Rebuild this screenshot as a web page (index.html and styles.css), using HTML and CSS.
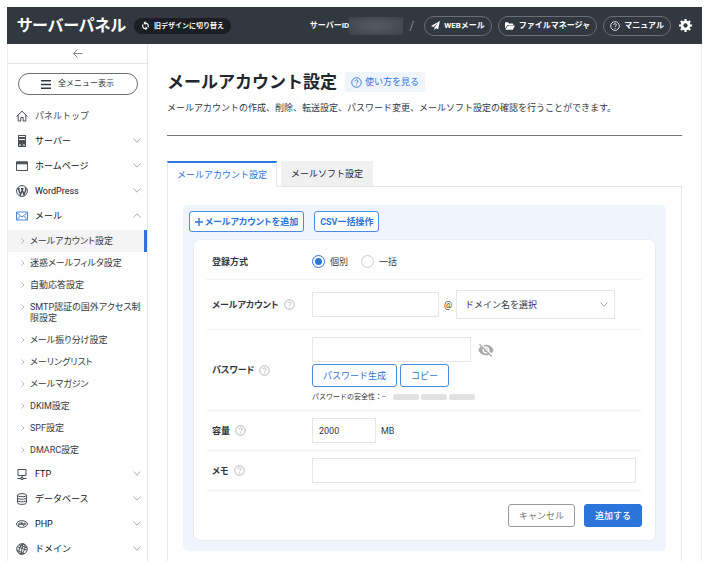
FILE: index.html
```html
<!DOCTYPE html>
<html lang="ja">
<head>
    <meta charset="UTF-8">
    <meta name="viewport" content="width=device-width, initial-scale=1.0">
    <title>サーバーパネル</title>
    <link rel="stylesheet" href="styles.css">
</head>
<body>
    <svg class="sprite" aria-hidden="true">
        <symbol id="down" viewBox="0 0 8 5"><path d="M.5 .5 4 4.2 7.5 .5"/></symbol>
        <symbol id="up" viewBox="0 0 8 5"><path d="M.5 4.5 4 .8 7.5 4.5"/></symbol>
        <symbol id="right" viewBox="0 0 4 6"><path d="M.5 .5 3 3 .5 5.5"/></symbol>
        <symbol id="help" viewBox="0 0 12 12"><circle cx="6" cy="6" r="5.2"/><path d="M4.4 4.8c0-2.2 3.3-2.1 3.3-.2 0 1.2-1.6 1.2-1.6 2.4M6.1 8.2v1"/></symbol>
    </svg>

    <header class="header">
        <div class="logo">サーバーパネル</div>
        <button class="switch" type="button">
            <svg width="9" height="9" viewBox="0 0 24 24" fill="currentColor"><path d="M12 4V0L6.500 5.500 12 11V7c3.300 0 6 2.500 6 6 0 1-.3 2-.8 2.800l2 2C20.300 16.300 21 14.700 21 13c0-5-4-9-9-9zM12 19c-3.300 0-6-2.700-6-6 0-1 .3-2 .8-2.800l-2-2C3.700 9.600 3 11.200 3 13c0 5 4 9 9 9v3l5.500-5.500L12 14z"/></svg>
            旧デザインに切り替え
        </button>
        <div class="header-right">
            <span class="server-id">サーバーID<span class="masked"></span></span>
            <span class="slash">/</span>
            <a class="pill" href="#">
                <svg width="9" height="9" viewBox="0 0 24 24" fill="currentColor"><path d="M24 0 0 13l6 3L19 5 9 17.500V24l4-5 6 3z"/></svg>
                WEBメール
            </a>
            <a class="pill" href="#">
                <svg width="10" height="8" viewBox="0 0 20 16" fill="currentColor"><path d="M0 13V2c0-1 .6-1.500 1.500-1.500H6l2 2.500h7c1 0 1.500.6 1.500 1.500V6H5L0 13zM5.800 7.200H20L15.500 15.500H.8z"/></svg>
                ファイルマネージャ
            </a>
            <a class="pill" href="#">
                <svg class="line" width="10" height="10"><use href="#help"/></svg>
                マニュアル
            </a>
            <button class="gear" type="button" aria-label="設定">
                <svg width="13" height="13" viewBox="0 0 24 24"><g fill="currentColor"><path d="M10 0h4v24h-4z"/><path d="M10 0h4v24h-4z" transform="rotate(45 12 12)"/><path d="M10 0h4v24h-4z" transform="rotate(90 12 12)"/><path d="M10 0h4v24h-4z" transform="rotate(135 12 12)"/><circle cx="12" cy="12" r="9"/></g><circle class="gear-hole" cx="12" cy="12" r="4"/></svg>
            </button>
        </div>
    </header>

    <div class="layout">
        <nav class="sidebar">
            <button class="collapse" type="button" aria-label="閉じる">
                <svg class="line" width="10" height="9" viewBox="0 0 10 9"><path d="M9.500 4.500h-9M4.500 .5l-4 4 4 4"/></svg>
            </button>
            <button class="all-menu" type="button">
                <svg class="line thick" width="10" height="9" viewBox="0 0 10 9"><path d="M0 .8h10M0 4.500h10M0 8.200h10"/></svg>
                全メニュー表示
            </button>
            <ul class="menu">
                <li><a class="menu-item" href="#">
                    <svg class="line icon" viewBox="0 0 12 12"><path d="M.5 6.500 6 1.200l5.500 5.300M2.200 5.200v5.800h2.600V7.500h2.400V11h2.600V5.200"/></svg>
                    <span class="light">パネルトップ</span>
                </a></li>
                <li><a class="menu-item" href="#">
                    <svg class="icon" viewBox="0 0 12 12"><path fill="currentColor" d="M2 0h8v12H2z"/><path fill="none" stroke="#fff" d="M3 1.500h6M3 4.500h6M3 10h2M7 10h2"/></svg>
                    <span>サーバー</span><svg class="line arrow"><use href="#down"/></svg>
                </a></li>
                <li><a class="menu-item" href="#">
                    <svg class="line icon" viewBox="0 0 12 12"><path d="M.5 2h11v8.500H.5z"/><path fill="currentColor" d="M.5 2h11v1.800H.5z"/></svg>
                    <span>ホームページ</span><svg class="line arrow"><use href="#down"/></svg>
                </a></li>
                <li><a class="menu-item" href="#">
                    <svg class="line icon" viewBox="0 0 12 12"><circle cx="6" cy="6" r="5.400"/><path class="thick" d="M1.500 3.800h2.200M2.500 4l2 5.800L6 5.500M5 3.800h2.500M6 4l2 5.800 1.800-5c.2-.8-.6-1.200-.5-2.300"/></svg>
                    <span>WordPress</span><svg class="line arrow"><use href="#down"/></svg>
                </a></li>
                <li><a class="menu-item" href="#">
                    <svg class="line icon blue" viewBox="0 0 12 12"><path d="M.5 2h11v8H.5zM.5 2.500 6 7l5.500-4.500M.5 10l3.700-4M11.500 10 7.800 6"/></svg>
                    <span>メール</span><svg class="line arrow"><use href="#up"/></svg>
                </a>
                <ul class="submenu">
                    <li><a class="active" href="#"><svg class="line"><use href="#right"/></svg><span>メールアカウント設定</span></a></li>
                    <li><a href="#"><svg class="line"><use href="#right"/></svg><span>迷惑メールフィルタ設定</span></a></li>
                    <li><a href="#"><svg class="line"><use href="#right"/></svg><span>自動応答設定</span></a></li>
                    <li><a href="#"><svg class="line"><use href="#right"/></svg><span>SMTP認証の国外アクセス制限設定</span></a></li>
                    <li><a href="#"><svg class="line"><use href="#right"/></svg><span>メール振り分け設定</span></a></li>
                    <li><a href="#"><svg class="line"><use href="#right"/></svg><span>メーリングリスト</span></a></li>
                    <li><a href="#"><svg class="line"><use href="#right"/></svg><span>メールマガジン</span></a></li>
                    <li><a href="#"><svg class="line"><use href="#right"/></svg><span>DKIM設定</span></a></li>
                    <li><a href="#"><svg class="line"><use href="#right"/></svg><span>SPF設定</span></a></li>
                    <li><a href="#"><svg class="line"><use href="#right"/></svg><span>DMARC設定</span></a></li>
                </ul></li>
                <li><a class="menu-item" href="#">
                    <svg class="line icon" viewBox="0 0 12 12"><path d="M2 1.500h8v6H2zM6 7.500v2M1.500 10.500H5M7 10.500h3.500M5 9.500h2v2H5z"/></svg>
                    <span>FTP</span><svg class="line arrow"><use href="#down"/></svg>
                </a></li>
                <li><a class="menu-item" href="#">
                    <svg class="line icon" viewBox="0 0 12 12"><ellipse cx="6" cy="2.200" rx="4.500" ry="1.600"/><path d="M1.500 2.200v7.600c0 2.100 9 2.100 9 0V2.200M1.500 4.800c0 2 9 2 9 0M1.500 7.300c0 2 9 2 9 0"/></svg>
                    <span>データベース</span><svg class="line arrow"><use href="#down"/></svg>
                </a></li>
                <li><a class="menu-item" href="#">
                    <svg class="line icon" viewBox="0 0 12 12"><ellipse cx="6" cy="6" rx="5.500" ry="3.300"/><path d="M2.500 8l.6-3h1c1.200 0 1 1.600-.2 1.600h-1M5.200 7l.7-3M5.600 5.200h1.200L6.500 7M7.500 8l.6-3h1c1.200 0 1 1.600-.2 1.600h-1"/></svg>
                    <span>PHP</span><svg class="line arrow"><use href="#down"/></svg>
                </a></li>
                <li><a class="menu-item" href="#">
                    <svg class="line icon" viewBox="0 0 12 12"><circle cx="6" cy="6" r="5.300"/><ellipse cx="6" cy="6" rx="2.500" ry="5.300" transform="rotate(20 6 6)"/><path d="M1.300 3.700 11 7.200M3 1.800l8 3M1 7l7 3.800M6.800 .8 5.200 11.200"/></svg>
                    <span>ドメイン</span><svg class="line arrow"><use href="#down"/></svg>
                </a></li>
            </ul>
        </nav>

        <main class="main">
            <div class="title-row">
                <h1>メールアカウント設定</h1>
                <a class="howto" href="#"><svg class="line" width="11" height="11"><use href="#help"/></svg>使い方を見る</a>
            </div>
            <p class="lead">メールアカウントの作成、削除、転送設定、パスワード変更、メールソフト設定の確認を行うことができます。</p>

            <div class="tabs">
                <button class="tab active" type="button">メールアカウント設定</button>
                <button class="tab" type="button">メールソフト設定</button>
            </div>

            <section class="panel">
                <div class="box">
                    <div class="actions">
                        <button class="btn small" type="button"><svg class="line thick" width="8" height="8" viewBox="0 0 8 8"><path d="M4 0v8M0 4h8"/></svg>メールアカウントを追加</button>
                        <button class="btn small" type="button">CSV一括操作</button>
                    </div>
                    <form class="card">
                        <div class="row short" role="radiogroup" aria-labelledby="method">
                            <span class="label" id="method">登録方式</span>
                            <div class="field">
                                <label class="radio"><input type="radio" name="method" checked>個別</label>
                                <label class="radio"><input type="radio" name="method">一括</label>
                            </div>
                        </div>
                        <div class="row tall">
                            <div class="label"><label for="account">メールアカウント</label><button class="help" type="button" aria-label="ヘルプ"><svg class="line"><use href="#help"/></svg></button></div>
                            <div class="field">
                                <input class="input account" id="account" type="text">
                                <span class="at">@</span>
                                <div class="select">
                                    <select aria-label="ドメイン"><option>ドメイン名を選択</option></select>
                                    <svg class="line arrow"><use href="#down"/></svg>
                                </div>
                            </div>
                        </div>
                        <div class="row">
                            <div class="label"><label for="password">パスワード</label><button class="help" type="button" aria-label="ヘルプ"><svg class="line"><use href="#help"/></svg></button></div>
                            <div class="field-stack">
                                <div class="field">
                                    <input class="input password" id="password" type="password">
                                    <button class="eye" type="button" aria-label="表示切替">
                                        <svg width="16" height="14" viewBox="1 2 22 20" fill="currentColor"><path d="M12 7c2.760 0 5 2.240 5 5 0 .650-.130 1.260-.360 1.830l2.920 2.920c1.510-1.260 2.700-2.890 3.430-4.750C21.270 7.610 17 4.500 12 4.500c-1.400 0-2.740.250-3.980.700l2.160 2.160C10.740 7.130 11.350 7 12 7zM2 4.270l2.740 2.740C3.080 8.300 1.780 10.020 1 12c1.730 4.390 6 7.500 11 7.500 1.550 0 3.030-.300 4.380-.840L19.730 22 21 20.730 3.270 3 2 4.270zM7.530 9.800l1.550 1.550c-.050.210-.080.430-.080.650 0 1.660 1.340 3 3 3 .220 0 .440-.030.650-.080l1.550 1.550c-.670.330-1.410.530-2.200.530-2.760 0-5-2.240-5-5 0-.790.200-1.530.530-2.200zM11.840 9.020l3.150 3.150.020-.160c0-1.660-1.340-3-3-3z"/></svg>
                                    </button>
                                </div>
                                <div class="field buttons">
                                    <button class="btn" type="button">パスワード生成</button>
                                    <button class="btn" type="button">コピー</button>
                                </div>
                                <div class="strength">パスワードの安全性：--<span class="bars"><i></i><i></i><i></i></span></div>
                            </div>
                        </div>
                        <div class="row">
                            <div class="label"><label for="size">容量</label><button class="help" type="button" aria-label="ヘルプ"><svg class="line"><use href="#help"/></svg></button></div>
                            <div class="field"><input class="input size" id="size" type="text" value="2000"><span class="unit">MB</span></div>
                        </div>
                        <div class="row">
                            <div class="label"><label for="memo">メモ</label><button class="help" type="button" aria-label="ヘルプ"><svg class="line"><use href="#help"/></svg></button></div>
                            <div class="field"><input class="input memo" id="memo" type="text"></div>
                        </div>
                        <div class="submit">
                            <button class="btn gray" type="button">キャンセル</button>
                            <button class="btn primary" type="button">追加する</button>
                        </div>
                    </form>
                </div>
            </section>
        </main>
    </div>
</body>
</html>
```
FILE: styles.css
```css
* {
    box-sizing: border-box;
}

body {
    margin: 7px 8px 0 7px;
    font-family: Roboto, "Noto Sans CJK JP", sans-serif;
    font-size: 9px;
    line-height: 12px;
    color: #333840;
    background: #fff;
    display: flex;
    flex-direction: column;
    min-height: calc(100vh - 7px);
}

button, input, select {
    font: inherit;
    color: inherit;
}

button {
    padding: 0;
    border: 0;
    background: none;
    white-space: nowrap;
    cursor: pointer;
}

a {
    color: inherit;
    text-decoration: none;
}

ul {
    list-style: none;
    margin: 0;
    padding: 0;
}

svg {
    flex: none;
}

.sprite {
    display: none;
}

.line {
    fill: none;
    stroke: currentColor;
}

.thick {
    stroke-width: 1.4;
}

/* header */
.header {
    display: flex;
    align-items: center;
    height: 37px;
    padding: 0 10px;
    background: #323840;
    color: #fff;
    white-space: nowrap;
}

.logo {
    font-size: 16px;
    line-height: 20px;
    font-weight: bold;
    font-feature-settings: "palt";
}

.switch {
    display: flex;
    align-items: center;
    gap: 4px;
    height: 16px;
    margin-left: 8px;
    padding: 0 7px;
    border-radius: 8px;
    background: #1b1e23;
    font-size: 7px;
    font-weight: bold;
}

.header-right {
    display: flex;
    align-items: center;
    gap: 6px;
    margin-left: auto;
    font-size: 8px;
    font-weight: bold;
}

.server-id {
    display: flex;
    align-items: center;
}

.masked {
    width: 54px;
    height: 18px;
    background: radial-gradient(ellipse, #565c63, #3c424a);
}

.slash {
    margin-right: 4px;
    font-size: 12px;
    font-weight: normal;
    color: #8a8e94;
}

.pill {
    display: flex;
    align-items: center;
    gap: 4px;
    height: 20px;
    padding: 0 6px;
    border: 1px solid #6b6e75;
    border-radius: 10px;
}

.gear {
    display: flex;
    margin-left: 2px;
}

.gear-hole {
    fill: #323840;
}

.layout {
    display: flex;
    flex: 1;
    border: solid #ececec;
    border-width: 0 1px;
}

/* sidebar */
.sidebar {
    flex: none;
    width: 140px;
    border-right: 1px solid #e6e6e6;
}

.collapse {
    display: flex;
    align-items: center;
    justify-content: center;
    width: 100%;
    height: 20px;
    border-bottom: 1px solid #e6e6e6;
    color: #888;
}

.all-menu {
    display: flex;
    align-items: center;
    justify-content: center;
    gap: 7px;
    width: 120px;
    height: 22px;
    margin: 9px auto 8px;
    border: 1px solid #6b6e75;
    border-radius: 11px;
    font-size: 8px;
}

.menu-item {
    display: flex;
    align-items: center;
    gap: 7px;
    height: 25px;
    padding: 0 6px 0 8px;
    color: #111;
}

.light {
    color: #444950;
}

.icon {
    width: 12px;
    height: 12px;
    color: #4b5057;
}

.blue {
    color: #4a8be0;
}

.arrow {
    width: 8px;
    height: 5px;
    margin-left: auto;
    color: #aaa;
}

.submenu {
    padding-top: 2px;
    line-height: 11px;
    font-feature-settings: "palt";
}

.submenu a {
    display: flex;
    padding: 6px 0 5px 13px;
    border-right: 3px solid transparent;
}

.submenu a svg {
    width: 4px;
    height: 6px;
    margin: 2px 5px 0 0;
    color: #bbb;
}

.submenu a.active {
    background: #f4f4f5;
    border-color: #2b74dc;
}

/* contents */
.main {
    flex: 1;
    min-width: 0;
    display: flex;
    flex-direction: column;
    padding: 28px 19px 0;
}

.title-row {
    display: flex;
    align-items: center;
    gap: 8px;
}

h1 {
    margin: 0;
    font-size: 17px;
    line-height: 20px;
    color: #22272e;
}

.howto {
    display: flex;
    align-items: center;
    gap: 3px;
    height: 20px;
    padding: 0 6px;
    border-radius: 2px;
    background: #f0f5fd;
    color: #2b74dc;
}

.lead {
    margin: 0 0 25px;
    padding: 10px 0 21px;
    border-bottom: 1px solid #74747c;
}

.tabs {
    display: flex;
    gap: 4px;
    height: 25px;
}

.tab {
    padding: 0 10px;
    background: #f0f0f0;
    color: #22272e;
}

.tab.active {
    height: 26px;
    padding: 0 9px;
    border: 1px solid #e6e6e6;
    border-top: 2px solid #2b74dc;
    border-bottom: 0;
    background: #fff;
    color: #2b74dc;
    z-index: 1;
}

.panel {
    flex: 1;
    padding: 18px 15px 10px;
    border: 1px solid #e6e6e6;
    border-bottom: 0;
}

.box {
    padding: 6px 10px 10px;
    border-radius: 5px;
    background: #f0f5fd;
}

.actions {
    display: flex;
    gap: 10px;
    margin: 0 -4px 7px;
}

.btn {
    display: flex;
    align-items: center;
    gap: 2px;
    height: 23px;
    padding: 0 10px;
    border: 1px solid #4a8be0;
    border-radius: 3px;
    background: #fff;
    color: #2b74dc;
}

.small {
    height: 21px;
    padding: 0 5px;
    font-weight: bold;
    font-feature-settings: "palt";
}

.gray {
    border-color: #999;
    color: #777;
}

.primary {
    background: #2b74dc;
    border-color: #2b74dc;
    color: #fff;
    font-weight: 500;
}

.card {
    padding: 4px 13px 13px 12px;
    border: 1px solid #e8ebf0;
    border-radius: 7px;
    background: #fff;
}

.row {
    display: grid;
    grid-template-columns: 100px 1fr;
    align-items: center;
    padding: 7px 6px;
    border-bottom: 1px solid #f2f2f2;
}

.row.short {
    height: 36px;
}

.row.tall {
    padding: 10px 6px;
}

.label {
    display: flex;
    align-items: center;
    gap: 5px;
    font-weight: bold;
    font-feature-settings: "palt";
}

.help {
    display: flex;
    color: #b0b0b0;
}

.help svg {
    width: 11px;
    height: 11px;
}

.field {
    display: flex;
    align-items: center;
}

.radio {
    display: flex;
    align-items: center;
    gap: 5px;
    margin-right: 13px;
}

.radio input {
    appearance: none;
    width: 13px;
    height: 13px;
    margin: 0;
    border: 1px solid #ccc;
    border-radius: 50%;
}

.radio input:checked {
    border-color: #2b74dc;
    background: radial-gradient(circle, #2b74dc 3px, #fff 4px);
}

.input {
    height: 25px;
    padding: 0 6px;
    border: 1px solid #e6e6e6;
    background: #fff;
}

.account {
    width: 127px;
}

.at {
    margin: 0 4px 0 5px;
}

.select {
    position: relative;
    width: 159px;
}

.select select {
    appearance: none;
    width: 100%;
    height: 29px;
    padding: 0 8px;
    border: 1px solid #e6e6e6;
    border-radius: 0;
    background: #fff;
}

.select .arrow {
    position: absolute;
    top: 12px;
    right: 7px;
    pointer-events: none;
}

.password {
    width: 159px;
}

.eye {
    display: flex;
    margin-left: 7px;
    color: #aaa;
}

.buttons {
    gap: 3px;
    margin-top: 2px;
}

.strength {
    display: flex;
    align-items: center;
    height: 12px;
    margin-top: 4px;
    font-size: 7px;
}

.bars {
    display: flex;
    gap: 2px;
    margin-left: 7px;
}

.bars i {
    width: 26px;
    height: 6px;
    border-radius: 2px;
    background: #e2e2e2;
}

.size {
    width: 64px;
}

.unit {
    margin-left: 5px;
}

.memo {
    width: 100%;
}

.submit {
    display: flex;
    justify-content: flex-end;
    gap: 9px;
    padding-top: 13px;
}
```
